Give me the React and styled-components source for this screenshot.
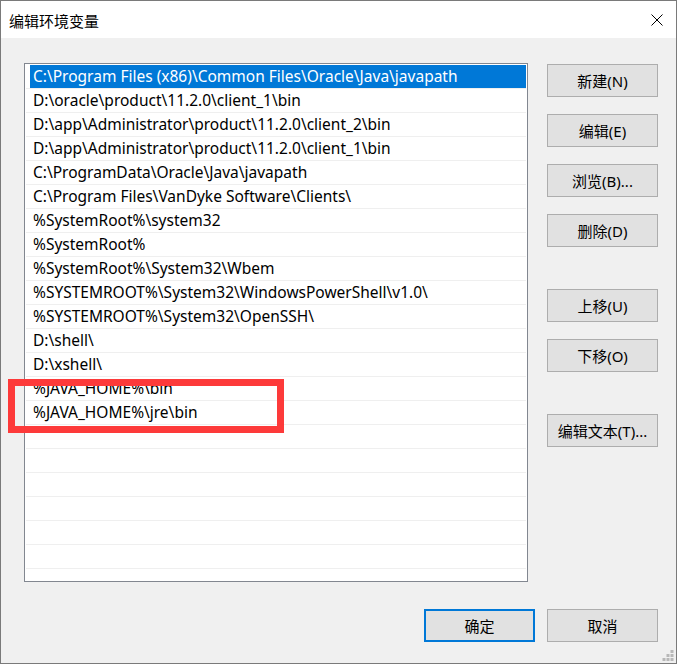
import React from "react";
import styled, { createGlobalStyle } from "styled-components";

const GlobalStyle = createGlobalStyle`
    html, body {
        margin: 0;
        padding: 0;
        background: #f0f0f0;
    }
    * {
        box-sizing: border-box;
    }
`;

const FONT = `"Noto Sans", "Noto Sans CJK SC", sans-serif`;

const Window = styled.div`
    position: relative;
    width: 677px;
    height: 664px;
    border: 1px solid #7a7a7a;
    background: #f0f0f0;
    font-family: ${FONT};
    color: #000;
    display: flex;
    flex-direction: column;
    overflow: hidden;
`;

const TitleBar = styled.div`
    height: 37px;
    flex-shrink: 0;
    background: #fff;
    display: flex;
    align-items: center;
    justify-content: space-between;
    padding: 0 13px 0 8px;
`;

const Title = styled.div`
    font-family: "Noto Sans CJK SC", sans-serif;
    font-size: 15px;
    line-height: 1;
    margin-top: 1px;
`;

const CloseButton = styled.div`
    width: 12px;
    height: 12px;
    display: flex;
    margin-top: 1px;
`;

const Body = styled.div`
    flex: 1;
    display: flex;
    flex-direction: column;
    padding: 25px 18px 21px 23px;
`;

const MainRow = styled.div`
    display: flex;
    gap: 19px;
`;

const ListBox = styled.div`
    width: 504px;
    height: 519px;
    border: 1px solid #828790;
    background: #fff;
    padding-top: 1px;
    overflow: hidden;
`;

const Row = styled.div`
    height: 24px;
    margin-left: 1px;
    margin-right: 1px;
    border-bottom: 1px solid #efefef;
    padding-left: 7px;
    font-size: 15.5px;
    line-height: 23px;
    white-space: nowrap;
    color: ${(p) => (p.$selected ? "#fff" : "#000")};
    background: ${(p) => (p.$selected ? "linear-gradient(to right, transparent 4px, #0078d7 4px)" : "transparent")};
`;

const ButtonColumn = styled.div`
    display: flex;
    flex-direction: column;
    padding-top: 1px;
`;

const Button = styled.div`
    width: 111px;
    height: 33px;
    background: #e1e1e1;
    border: ${(p) => (p.$primary ? "2px solid #0078d7" : "1px solid #adadad")};
    display: flex;
    align-items: center;
    justify-content: center;
    font-size: 15px;
    margin-top: ${(p) => p.$gap || 0}px;
`;

const Footer = styled.div`
    display: flex;
    justify-content: flex-end;
    gap: 12px;
    margin-top: 27px;
`;

const Highlight = styled.div`
    position: absolute;
    left: 7px;
    top: 378px;
    width: 276px;
    height: 54px;
    border: 7px solid #fd3a3a;
`;

const Grip = styled.svg`
    position: absolute;
    right: 2px;
    bottom: 1px;
`;

const paths = [
    "C:\\Program Files (x86)\\Common Files\\Oracle\\Java\\javapath",
    "D:\\oracle\\product\\11.2.0\\client_1\\bin",
    "D:\\app\\Administrator\\product\\11.2.0\\client_2\\bin",
    "D:\\app\\Administrator\\product\\11.2.0\\client_1\\bin",
    "C:\\ProgramData\\Oracle\\Java\\javapath",
    "C:\\Program Files\\VanDyke Software\\Clients\\",
    "%SystemRoot%\\system32",
    "%SystemRoot%",
    "%SystemRoot%\\System32\\Wbem",
    "%SYSTEMROOT%\\System32\\WindowsPowerShell\\v1.0\\",
    "%SYSTEMROOT%\\System32\\OpenSSH\\",
    "D:\\shell\\",
    "D:\\xshell\\",
    "%JAVA_HOME%\\bin",
    "%JAVA_HOME%\\jre\\bin",
];

const sideButtons = [
    { label: "新建(N)", gap: 0 },
    { label: "编辑(E)", gap: 17 },
    { label: "浏览(B)...", gap: 17 },
    { label: "删除(D)", gap: 17 },
    { label: "上移(U)", gap: 42 },
    { label: "下移(O)", gap: 17 },
    { label: "编辑文本(T)...", gap: 42 },
];

function App() {
    const rows = [...paths];
    while (rows.length < 22) rows.push("");

    return (
        <>
            <GlobalStyle />
            <Window>
                <TitleBar>
                    <Title>编辑环境变量</Title>
                    <CloseButton>
                        <svg width="12" height="12" viewBox="0 0 12 12">
                            <path d="M0.5 0.5 L11.5 11.5 M11.5 0.5 L0.5 11.5" stroke="#000" strokeWidth="1" />
                        </svg>
                    </CloseButton>
                </TitleBar>
                <Body>
                    <MainRow>
                        <ListBox>
                            {rows.map((text, index) => (
                                <Row key={index} $selected={index === 0}>{text}</Row>
                            ))}
                        </ListBox>
                        <ButtonColumn>
                            {sideButtons.map((btn) => (
                                <Button key={btn.label} $gap={btn.gap}>{btn.label}</Button>
                            ))}
                        </ButtonColumn>
                    </MainRow>
                    <Footer>
                        <Button $primary>确定</Button>
                        <Button>取消</Button>
                    </Footer>
                </Body>
                <Highlight />
                <Grip width="12" height="12" viewBox="0 0 12 12">
                    {[[8, 0], [4, 4], [8, 4], [0, 8], [4, 8], [8, 8]].map(([x, y]) => (
                        <rect key={x + "-" + y} x={x + 0.5} y={y} width="3" height="3" fill="#b8b8b8" />
                    ))}
                </Grip>
            </Window>
        </>
    );
}

export default App;
